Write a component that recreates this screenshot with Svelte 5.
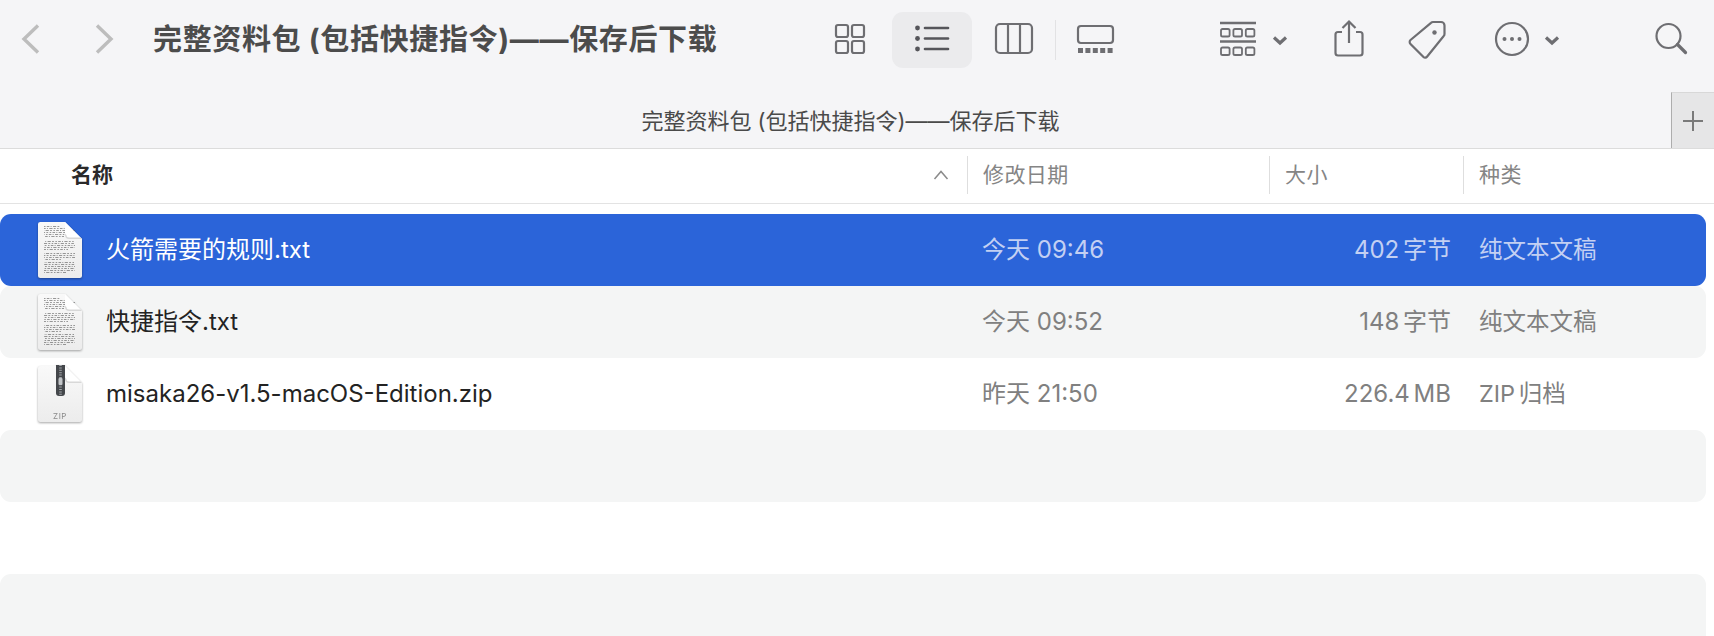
<script>
  const columns = ["修改日期", "大小", "种类"];

  const files = [
    { name: "火箭需要的规则.txt", date: "今天 09:46", size: "402 字节", kind: "纯文本文稿", icon: "doc", selected: true },
    { name: "快捷指令.txt", date: "今天 09:52", size: "148 字节", kind: "纯文本文稿", icon: "doc" },
    { name: "misaka26-v1.5-macOS-Edition.zip", date: "昨天 21:50", size: "226.4 MB", kind: "ZIP 归档", icon: "zip" },
    {},
    {},
    {}
  ];

  // tiny text lines on the document icon: [y, right edge]
  const docLines = [
    [5, 22], [7, 30], [9, 37], [11, 37], [13, 37], [15, 26],
    [20, 37], [22, 37], [24, 37], [26, 37], [28, 30],
    [32, 37], [34, 37], [36, 37], [38, 24],
    [41, 37], [43, 37], [45, 37], [47, 37], [49, 37], [51, 28]
  ];
</script>

{#snippet pageBody(id)}
  <defs>
    <linearGradient id={id} x1="0" y1="0" x2="0" y2="1">
      <stop offset="0" stop-color="#f9f9f9" />
      <stop offset="1" stop-color="#ececec" />
    </linearGradient>
  </defs>
  <path d="M2.5 1H27L44 18V54.5A2.5 2.5 0 0 1 41.5 57H2.5A2.5 2.5 0 0 1 0 54.5V3.5A2.5 2.5 0 0 1 2.5 1Z" fill="url(#{id})" />
{/snippet}

{#snippet pageFold()}
  <path d="M27 1L44 18H31A4 4 0 0 1 27 14Z" fill="#fff" />
  <path d="M27 14A4 4 0 0 0 31 18H44L42.5 16.5H31A2.6 2.6 0 0 1 28.4 14L27 12.5Z" fill="#c8c8c8" opacity=".7" />
{/snippet}

{#snippet docIcon(id)}
  <svg class="file-icon" width="44" height="58" viewBox="0 0 44 58">
    {@render pageBody(id)}
    {#each docLines as [y, end], n}
      <line x1="6" x2={end} y1={y + 0.5} y2={y + 0.5} stroke="#5e5e5e" stroke-width="1" stroke-dasharray="1.5 1.3 2.6 1.2 1 1.4 3.2 1.3 1.8 1.5" stroke-dashoffset={n * 3.7} opacity=".62" />
    {/each}
    {@render pageFold()}
  </svg>
{/snippet}

{#snippet zipIcon(id)}
  <svg class="file-icon" width="44" height="58" viewBox="0 0 44 58">
    {@render pageBody(id)}
    <path d="M18 0H27V28A3 3 0 0 1 24 31H21A3 3 0 0 1 18 28Z" fill="#44474b" />
    <line x1="22.5" x2="22.5" y1="0" y2="30" stroke="#a3a7ab" stroke-width="2.6" stroke-dasharray="1 1.4" />
    <rect x="20.5" y="13" width="4" height="7" rx="1" fill="#c3c6c9" />
    {@render pageFold()}
    <text class="zip-label" x="22" y="54" text-anchor="middle">ZIP</text>
  </svg>
{/snippet}

<div class="window">
  <header class="toolbar">
    <svg class="back" width="30" height="56" viewBox="16 12 30 56">
      <path d="M38 25.5L24 39L38 52.5" class="nav" />
    </svg>
    <svg class="forward" width="28" height="56" viewBox="90 12 28 56">
      <path d="M97 25.5L111 39L97 52.5" class="nav" />
    </svg>
    <h1 class="title">完整资料包 (包括快捷指令)——保存后下载</h1>

    <svg class="ic-grid" width="50" height="56" viewBox="825 12 50 56">
      <g class="line">
        <rect x="836" y="25" width="12" height="12" rx="2" />
        <rect x="852" y="25" width="12" height="12" rx="2" />
        <rect x="836" y="41" width="12" height="12" rx="2" />
        <rect x="852" y="41" width="12" height="12" rx="2" />
      </g>
    </svg>
    <div class="view-active">
      <svg width="80" height="56" viewBox="892 12 80 56">
        <g fill="#55555a">
          <circle cx="917.5" cy="28" r="2.4" />
          <circle cx="917.5" cy="38.5" r="2.4" />
          <circle cx="917.5" cy="49" r="2.4" />
        </g>
        <g stroke="#55555a" stroke-width="2.6" stroke-linecap="round">
          <line x1="925" x2="948" y1="28" y2="28" />
          <line x1="925" x2="948" y1="38.5" y2="38.5" />
          <line x1="925" x2="948" y1="49" y2="49" />
        </g>
      </svg>
    </div>
    <svg class="ic-cols" width="58" height="56" viewBox="985 12 58 56">
      <g class="line">
        <rect x="996" y="24" width="36" height="29" rx="4" />
        <line x1="1008" x2="1008" y1="24" y2="53" />
        <line x1="1020" x2="1020" y1="24" y2="53" />
      </g>
    </svg>
    <div class="sep"></div>
    <svg class="ic-gallery" width="58" height="56" viewBox="1067 12 58 56">
      <rect class="line" x="1078" y="26" width="35" height="17" rx="3" />
      <g fill="#6e6e72">
        {#each [0, 1, 2, 3, 4] as i}
          <rect x={1078 + i * 7.4} y="48" width="5" height="5" />
        {/each}
      </g>
    </svg>

    <svg class="ic-group" width="85" height="56" viewBox="1210 12 85 56">
      <g stroke="#6e6e72" stroke-width="2.4">
        <line x1="1220" x2="1256" y1="23" y2="23" />
        <line x1="1220" x2="1256" y1="41.5" y2="41.5" />
      </g>
      <g fill="none" stroke="#6e6e72" stroke-width="1.8">
        {#each [1221, 1233.4, 1245.8] as x}
          <rect x={x} y="29" width="8.6" height="7.5" rx="1.6" />
          <rect x={x} y="47.500" width="8.6" height="7.5" rx="1.6" />
        {/each}
      </g>
      <path class="chev" d="M1274 37.5L1280 43L1286 37.5" />
    </svg>
    <svg class="ic-share" width="48" height="56" viewBox="1325 12 48 56">
      <g class="line">
        <path d="M1342 32H1338A2.5 2.5 0 0 0 1335.500 34.500V53A2.500 2.500 0 0 0 1338 55.500H1360A2.500 2.500 0 0 0 1362.500 53V34.500A2.500 2.500 0 0 0 1360 32H1356" />
        <path d="M1349 43V22M1342.500 28L1349 21.500L1355.500 28" />
      </g>
    </svg>
    <svg class="ic-tag" width="55" height="56" viewBox="1400 12 55 56">
      <path class="line" d="M1410.500 40L1431 22.800A3 3 0 0 1 1433 22H1441A3.500 3.500 0 0 1 1444.500 25.500V34A3 3 0 0 1 1443.500 36.300L1427 56.800A2.400 2.400 0 0 1 1423.500 57L1410.500 44A2.800 2.800 0 0 1 1410.500 40Z" />
      <circle cx="1434.500" cy="32.500" r="2.200" fill="#6e6e72" />
    </svg>
    <svg class="ic-more" width="80" height="56" viewBox="1490 12 80 56">
      <circle class="line" cx="1512" cy="39" r="16" />
      <g fill="#6e6e72">
        <circle cx="1504.500" cy="39" r="2" />
        <circle cx="1512" cy="39" r="2" />
        <circle cx="1519.500" cy="39" r="2" />
      </g>
      <path class="chev" d="M1546 37.500L1552 43L1558 37.500" />
    </svg>
    <svg class="ic-search" width="40" height="56" viewBox="1655 12 40 56">
      <circle class="line" cx="1668.500" cy="36" r="12" />
      <path d="M1677.500 44.500L1685.500 52.500" stroke="#6e6e72" stroke-width="3.200" stroke-linecap="round" />
    </svg>
  </header>

  <div class="tabbar">
    <div class="tab-title">完整资料包 (包括快捷指令)——保存后下载</div>
    <div class="tab-add">
      <svg width="22" height="22" viewBox="0 0 22 22">
        <path d="M1 11H21M11 1V21" stroke="#7a7a7a" stroke-width="2" />
      </svg>
    </div>
  </div>

  <div class="list-head">
    <div class="head-name">
      <span>名称</span>
      <svg class="sort" width="16" height="10" viewBox="0 0 16 10">
        <path d="M1.500 9L8 1.500L14.500 9" fill="none" stroke="#8a8a8a" stroke-width="1.500" />
      </svg>
    </div>
    {#each columns as label}
      <div class="head-cell">{label}</div>
    {/each}
  </div>

  <div class="rows">
    {#each files as file, i}
      <div class="row" class:selected={file.selected} class:odd={i % 2 === 1}>
        {#if file.name}
          <div class="cell-name">
            {#if file.icon === "doc"}
              {@render docIcon(`page-${i}`)}
            {:else}
              {@render zipIcon(`page-${i}`)}
            {/if}
            <span class="file-name">{file.name}</span>
          </div>
          <div class="cell-date">{file.date}</div>
          <div class="cell-size">{file.size}</div>
          <div class="cell-kind">{file.kind}</div>
        {/if}
      </div>
    {/each}
  </div>
</div>

<style>
  :global(body) {
    margin: 0;
    background: #fff;
    overflow: hidden;
  }

  .window {
    width: 1714px;
    height: 636px;
    overflow: hidden;
    font-family: Inter, "Noto Sans CJK SC", sans-serif;
    background: #fff;
  }

  svg {
    display: block;
    flex: none;
  }

  .line {
    fill: none;
    stroke: #6e6e72;
    stroke-width: 2.2;
  }

  .nav {
    fill: none;
    stroke: #bdbdbd;
    stroke-width: 3.4;
  }

  .chev {
    fill: none;
    stroke: #6e6e72;
    stroke-width: 3.2;
  }

  .toolbar {
    display: flex;
    align-items: flex-start;
    height: 80px;
    padding: 12px 0 0 16px;
    background: #f5f5f7;
  }

  .forward {
    margin-left: 44px;
  }

  .title {
    flex: none;
    width: 660px;
    margin: 0 0 0 35px;
    font-size: 29px;
    line-height: 55px;
    font-weight: 700;
    letter-spacing: 0.65px;
    color: #4c4c4c;
    white-space: nowrap;
  }

  .ic-grid {
    margin-left: 12px;
  }

  .view-active {
    flex: none;
    margin-left: 17px;
    border-radius: 11px;
    background: #ebebed;
  }

  .ic-cols {
    margin-left: 13px;
  }

  .sep {
    flex: none;
    width: 1px;
    height: 40px;
    margin: 8px 0 0 12px;
    background: #e2e2e4;
  }

  .ic-gallery {
    margin-left: 11px;
  }

  .ic-group {
    margin-left: 85px;
  }

  .ic-share {
    margin-left: 30px;
  }

  .ic-tag {
    margin-left: 27px;
  }

  .ic-more {
    margin-left: 35px;
  }

  .ic-search {
    margin-left: 85px;
  }

  .tabbar {
    display: flex;
    height: 56px;
    background: #f5f5f7;
    border-bottom: 1px solid #dcdcdc;
  }

  .tab-title {
    flex: 1;
    padding-left: 30px;
    text-align: center;
    font-size: 22px;
    line-height: 58px;
    color: #4a4a4a;
    white-space: nowrap;
  }

  .tab-add {
    flex: none;
    display: flex;
    align-items: center;
    justify-content: center;
    box-sizing: border-box;
    width: 43px;
    border-left: 1px solid #adadad;
    border-top: 1px solid #d8d8d8;
    background: #e6e6e7;
  }

  .list-head,
  .row {
    display: grid;
    grid-template-columns: 967px 302px 194px 1fr;
  }

  .list-head {
    box-sizing: border-box;
    height: 55px;
    padding-top: 7px;
    border-bottom: 1px solid #e3e3e3;
    font-size: 21px;
    line-height: 38px;
    align-items: start;
  }

  .head-name {
    display: flex;
    align-items: center;
    justify-content: space-between;
    height: 38px;
    padding: 0 18px 0 71px;
    font-weight: 700;
    color: #2a2a2a;
  }

  .head-cell {
    height: 38px;
    padding-left: 15px;
    border-left: 1px solid #dedede;
    letter-spacing: 0.4px;
    color: #858585;
  }

  .rows {
    width: 1706px;
    padding-top: 10px;
  }

  .row {
    height: 72px;
    align-items: center;
    border-radius: 11px;
    font-size: 24px;
    line-height: 32px;
    color: #808080;
    white-space: nowrap;
  }

  .row.odd {
    background: #f4f5f5;
  }

  .row.selected {
    background: #2b64d9;
    color: #c3d0f3;
  }

  .cell-name {
    display: flex;
    align-items: center;
    padding-left: 38px;
    color: #232323;
  }

  .selected .cell-name {
    color: #fff;
  }

  .file-icon {
    margin-right: 24px;
    filter: drop-shadow(0 1px 1px rgba(0, 0, 0, 0.35));
  }

  .zip-label {
    font-size: 8px;
    letter-spacing: 0.5px;
    fill: #8a8a8a;
  }

  .cell-date {
    padding-left: 15px;
  }

  .cell-size {
    padding-right: 12px;
    text-align: right;
    word-spacing: -3px;
  }

  .cell-kind {
    padding-left: 16px;
    font-size: 23.5px;
    word-spacing: -3px;
  }
</style>
